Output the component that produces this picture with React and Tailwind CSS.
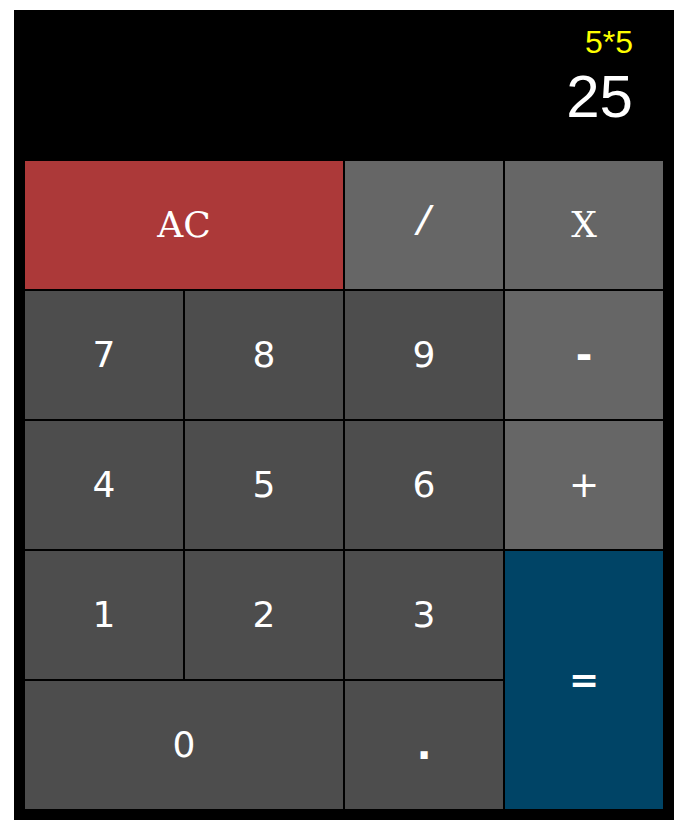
import React from "react";

const num = "bg-[#4d4d4d]";
const op = "bg-[#666666]";
const serif = "font-[family-name:'DejaVu_Serif',serif] text-[32px]";

const keys = [
  { id: "clear", label: "AC", cls: `col-span-2 bg-[#ac3939] ${serif}` },
  { id: "divide", label: "/", cls: `${op} font-[family-name:'Liberation_Mono',monospace] text-[40px]` },
  { id: "multiply", label: "X", cls: `${op} ${serif}` },
  { id: "seven", label: "7", cls: num },
  { id: "eight", label: "8", cls: num },
  { id: "nine", label: "9", cls: num },
  { id: "subtract", label: "-", cls: `${op} font-[family-name:'DejaVu_Sans_Mono',monospace] font-bold text-[40px]` },
  { id: "four", label: "4", cls: num },
  { id: "five", label: "5", cls: num },
  { id: "six", label: "6", cls: num },
  { id: "add", label: "+", cls: op },
  { id: "one", label: "1", cls: num },
  { id: "two", label: "2", cls: num },
  { id: "three", label: "3", cls: num },
  { id: "equals", label: "=", cls: "row-span-2 bg-[#004466] font-bold" },
  { id: "zero", label: "0", cls: `col-span-2 ${num}` },
  { id: "decimal", label: ".", cls: `${num} font-bold text-[40px]` },
];

export default function App() {
  return (
    <div className="min-h-screen bg-white pt-[10px] pl-[14px]">
      <div className="w-[660px] bg-black p-[10px]">
        <div className="flex h-[140px] flex-col items-end pr-[31px] pt-[6px] font-[family-name:'Liberation_Sans',Arial,sans-serif]">
          <div className="text-[32px] leading-none text-[#ffff00]">5*5</div>
          <div className="mt-[9px] text-[60px] leading-none text-white">25</div>
        </div>
        <div className="grid grid-cols-[repeat(4,160px)] grid-rows-[repeat(5,130px)] font-[family-name:'DejaVu_Sans',sans-serif] text-white">
          {keys.map((k) => (
            <button
              key={k.id}
              id={k.id}
              className={`flex items-center justify-center border border-black text-[36px] ${k.cls}`}
            >
              {k.label}
            </button>
          ))}
        </div>
      </div>
    </div>
  );
}
